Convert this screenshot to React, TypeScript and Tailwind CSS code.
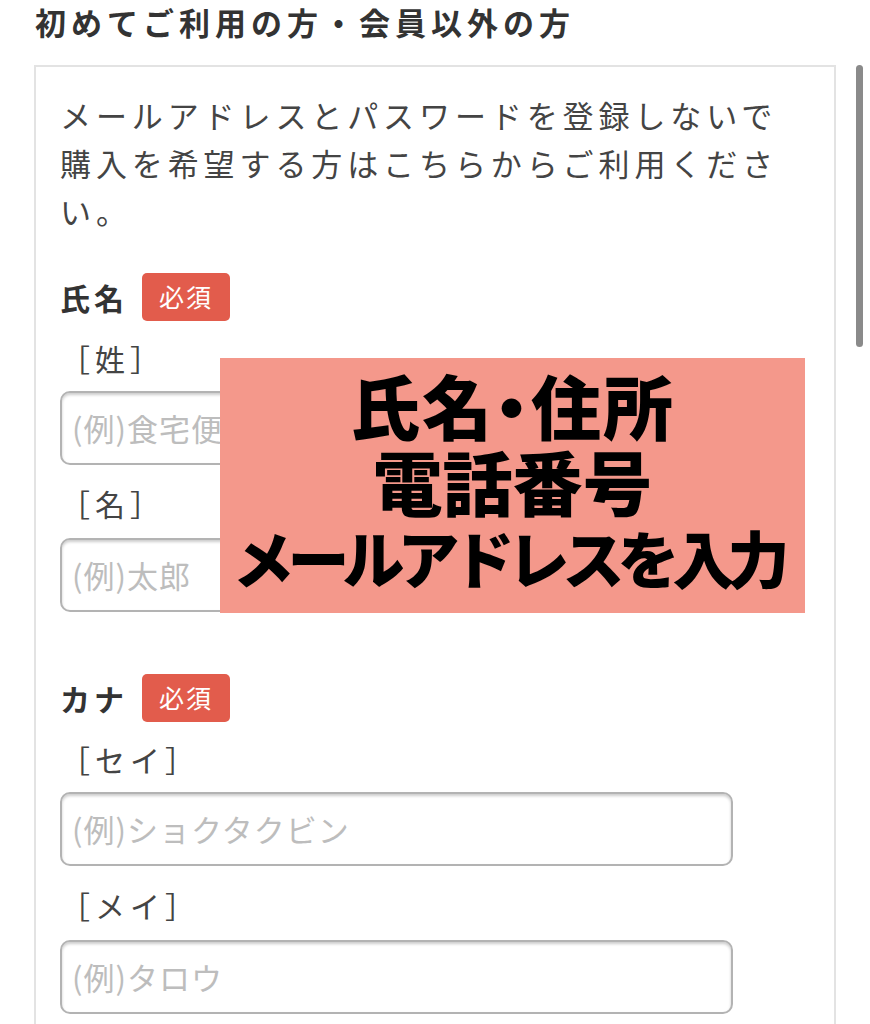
const font = { fontFamily: '"Noto Sans CJK JP", "Noto Sans", sans-serif' }

const Badge = () => (
  <span className="inline-flex items-center justify-center w-[88px] h-[48px] rounded-[5px] bg-[#e25c4c] text-white text-[25px] tracking-[2px]">
    必須
  </span>
)

const FieldLabel = ({ text }: { text: string }) => (
  <div className="flex items-center gap-[14px] h-[48px]">
    <span className="text-[30px] font-bold text-[#333] tracking-[4px]">{text}</span>
    <Badge />
  </div>
)

const SubLabel = ({ text, className }: { text: string, className?: string }) => (
  <div className={`h-[40px] flex items-center text-[30px] text-[#444] tracking-[5px] ${className ?? ""}`}>{text}</div>
)

const TextBox = ({ placeholder, className }: { placeholder: string, className?: string }) => (
  <div className={`w-[673px] h-[74px] rounded-[10px] border-2 border-[#b3b3b3] shadow-[inset_0_2px_3px_rgba(0,0,0,0.2)] flex items-center px-[10px] ${className ?? ""}`}>
    <span className="text-[31px] text-[#bdbdbd] tracking-[1px]">{placeholder}</span>
  </div>
)

export default function App() {
  return (
    <div className="relative w-[870px] h-[1024px] overflow-hidden bg-white" style={font}>
      <h1 className="ml-[35px] pt-[2px] text-[31px] leading-[39px] font-bold text-[#333] tracking-[5px]">
        初めてご利用の方・会員以外の方
      </h1>

      <div className="ml-[34px] mt-[24px] w-[802px] border-2 border-[#e3e3e3] px-[24px] pt-[24px] pb-[40px]">
        <p className="text-[31px] leading-[48px] text-[#444] tracking-[4.9px] w-[730px]">
          メールアドレスとパスワードを登録しないで購入を希望する方はこちらからご利用ください。
        </p>

        <div className="mt-[38px]">
          <FieldLabel text="氏名" />
          <SubLabel text="［姓］" className="mt-[17px]" />
          <TextBox placeholder="(例)食宅便" className="mt-[13px]" />
          <SubLabel text="［名］" className="mt-[18px]" />
          <TextBox placeholder="(例)太郎" className="mt-[15px]" />
        </div>

        <div className="mt-[62px]">
          <FieldLabel text="カナ" />
          <SubLabel text="［セイ］" className="mt-[17px]" />
          <TextBox placeholder="(例)ショクタクビン" className="mt-[13px]" />
          <SubLabel text="［メイ］" className="mt-[19px]" />
          <TextBox placeholder="(例)タロウ" className="mt-[15px]" />
        </div>
      </div>

      {/* overlay caption */}
      <div className="absolute left-[220px] top-[358px] w-[585px] h-[255px] pb-[10px] bg-[#f4988b] flex flex-col items-center justify-center text-black font-black leading-[76px] whitespace-nowrap">
        <span className="text-[70px] tracking-[2px] [font-feature-settings:'palt']">氏名・住所</span>
        <span className="text-[70px]">電話番号</span>
        <span className="text-[62px] tracking-[-7px] pr-[10px]">メールアドレスを入力</span>
      </div>

      {/* scrollbar */}
      <div className="absolute left-[856px] top-[65px] w-[7px] h-[282px] rounded-full bg-[#8a8a8a]" />
    </div>
  )
}
